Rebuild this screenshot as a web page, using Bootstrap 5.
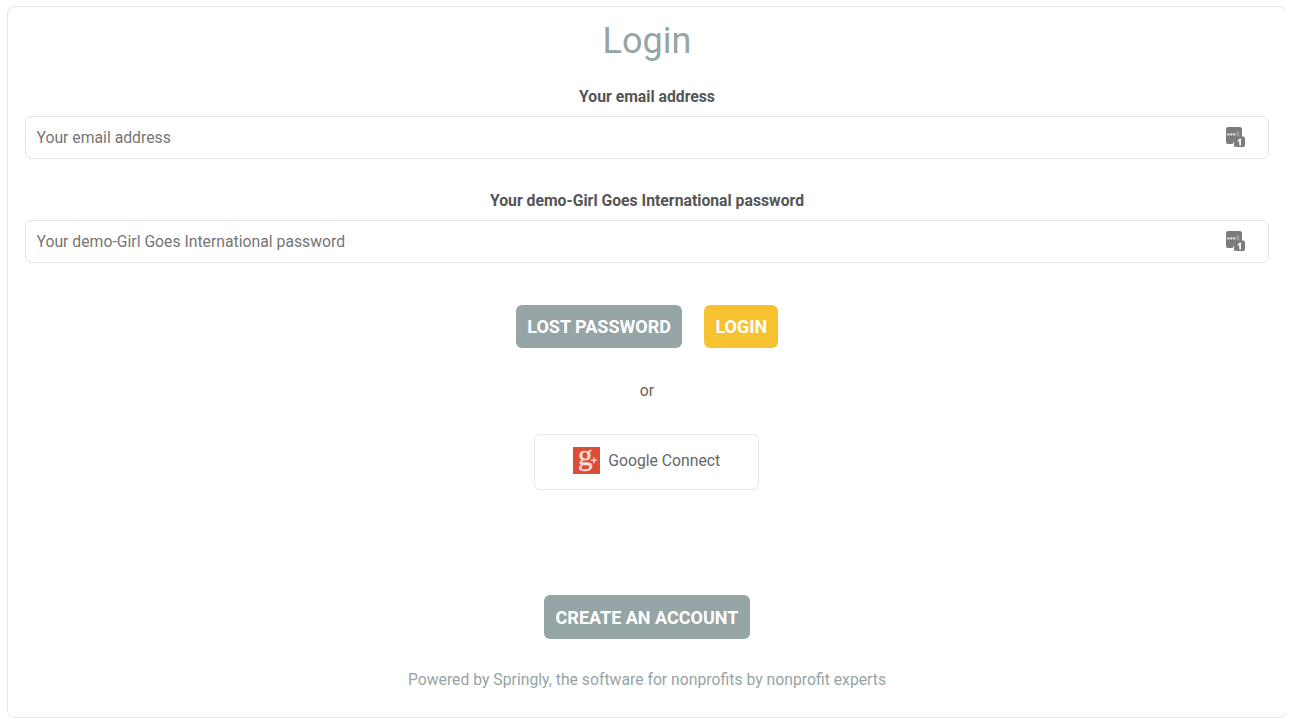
<!DOCTYPE html>
<html lang="en">
<head>
<meta charset="utf-8">
<title>Login</title>
<link href="https://cdn.jsdelivr.net/npm/bootstrap@5.3.0/dist/css/bootstrap.min.css" rel="stylesheet">
<style>
html,body{height:100%;}
body{font-family:Roboto,"Liberation Sans",sans-serif;font-size:15.75px;color:#6d5f5b;background:#fff;padding:6px 5px 8px 7px;}
.box-clip{overflow:hidden;}
.login-box{height:712px;margin-right:-1px;border:1px solid #e6e6e6;border-radius:8px;padding:0 17px;text-align:center;}
.login-title{font-size:36px;line-height:42px;font-weight:400;color:#95a5a6;margin:13px 0 0;}
.field-label{font-weight:700;font-size:15.75px;line-height:20px;color:#555;margin:0 0 9px;padding-top:1px;display:block;}
.field-wrap{position:relative;height:43px;margin-bottom:31px;}
.field-wrap .form-control{height:43px;border:1px solid #e3e3e3;border-radius:6px;padding:0 10.5px;font-size:15.75px;color:#6d5f5b;box-shadow:none;}
.field-wrap .form-control::placeholder{color:#757575;opacity:1;}
.key-icon{position:absolute;right:24px;top:11px;width:20px;height:20px;}
.action-btn{font-weight:700;font-size:18px;line-height:21px;color:#fff;border:0;border-radius:6px;padding:11px;text-transform:uppercase;}
.btn-grey{background:#95a5a6;}
.btn-grey:hover{background:#869596;color:#fff;}
.btn-gold{background:#f6c230;}
.btn-gold:hover{background:#e8b424;color:#fff;}
.btn-row{gap:22px;margin-top:42px;}
.btn-row .btn-grey{padding:11px 11.5px 11px 11.5px;}
.or-text{line-height:20px;margin:33px 0 33px;color:#6d5f5b;}
.google-row{padding-right:1px;}
.google-btn{width:225px;height:56px;border:1px solid #e6e6e6;border-radius:6px;color:#666;gap:8.5px;padding:0 0 2px;text-decoration:none;}
.google-logo{width:27px;height:27px;flex:none;display:block;overflow:visible;margin-bottom:1px;}
.create-row{margin-top:105px;}
.create-row .action-btn{padding:11.5px 12px;}
.powered{color:#95a5a6;line-height:20px;margin:31px 0 0;}
</style>
</head>
<body>
<div class="box-clip">
<div class="login-box">
  <h1 class="login-title">Login</h1>
  <form>
    <div class="mt-4">
      <label class="field-label" for="em">Your email address</label>
      <div class="field-wrap">
        <input id="em" type="text" class="form-control" placeholder="Your email address">
        <svg class="key-icon" viewBox="0 0 20 20"><rect x="1" y="0" width="16" height="17" rx="2" fill="#7c7c7c"/><rect x="2.3" y="6.4" width="2.2" height="2" fill="#e8e8e8"/><rect x="5.3" y="6.4" width="2.2" height="2" fill="#e8e8e8"/><rect x="8.3" y="6.4" width="2.2" height="2" fill="#e8e8e8"/><rect x="12" y="4.5" width="1.6" height="5" fill="#ababab"/><rect x="9" y="9.5" width="11" height="10.5" rx="1.8" fill="#7c7c7c"/><path d="M8 15.5h1v2H8z" fill="#fff"/><path d="M13 13l1.8-1.4h1.2v7h-1.8v-4.4l-1.2.5z" fill="#f2f2f2"/></svg>
      </div>
    </div>
    <div>
      <label class="field-label" for="pw">Your demo-Girl Goes International password</label>
      <div class="field-wrap">
        <input id="pw" type="password" class="form-control" placeholder="Your demo-Girl Goes International password">
        <svg class="key-icon" viewBox="0 0 20 20"><rect x="1" y="0" width="16" height="17" rx="2" fill="#7c7c7c"/><rect x="2.3" y="6.4" width="2.2" height="2" fill="#e8e8e8"/><rect x="5.3" y="6.4" width="2.2" height="2" fill="#e8e8e8"/><rect x="8.3" y="6.4" width="2.2" height="2" fill="#e8e8e8"/><rect x="12" y="4.5" width="1.6" height="5" fill="#ababab"/><rect x="9" y="9.5" width="11" height="10.5" rx="1.8" fill="#7c7c7c"/><path d="M8 15.5h1v2H8z" fill="#fff"/><path d="M13 13l1.8-1.4h1.2v7h-1.8v-4.4l-1.2.5z" fill="#f2f2f2"/></svg>
      </div>
    </div>
    <div class="d-flex justify-content-center btn-row">
      <a class="btn action-btn btn-grey" href="#">Lost password</a>
      <button type="button" class="btn action-btn btn-gold">Login</button>
    </div>
  </form>
  <p class="or-text">or</p>
  <div class="d-flex justify-content-center google-row">
    <a class="d-flex align-items-center justify-content-center google-btn" href="#">
      <svg class="google-logo" viewBox="0 0 27 27"><rect width="27" height="27" fill="#dd4b39"/><text x="5" y="18" font-family="Liberation Serif, serif" font-size="29" fill="#fbe0da" stroke="#fbe0da" stroke-width=".4">g</text><path d="M20.2 10.2h1.5v2.3H24V14h-2.300v2.300h-1.500V14h-2.300v-1.500h2.300z" fill="#f8d2ca"/></svg>
      <span>Google Connect</span>
    </a>
  </div>
  <div class="create-row">
    <a class="btn action-btn btn-grey" href="#">Create an account</a>
  </div>
  <p class="powered">Powered by Springly, the software for nonprofits by nonprofit experts</p>
</div>
</div>
<script src="https://cdn.jsdelivr.net/npm/bootstrap@5.3.0/dist/js/bootstrap.bundle.min.js"></script>
</body>
</html>
